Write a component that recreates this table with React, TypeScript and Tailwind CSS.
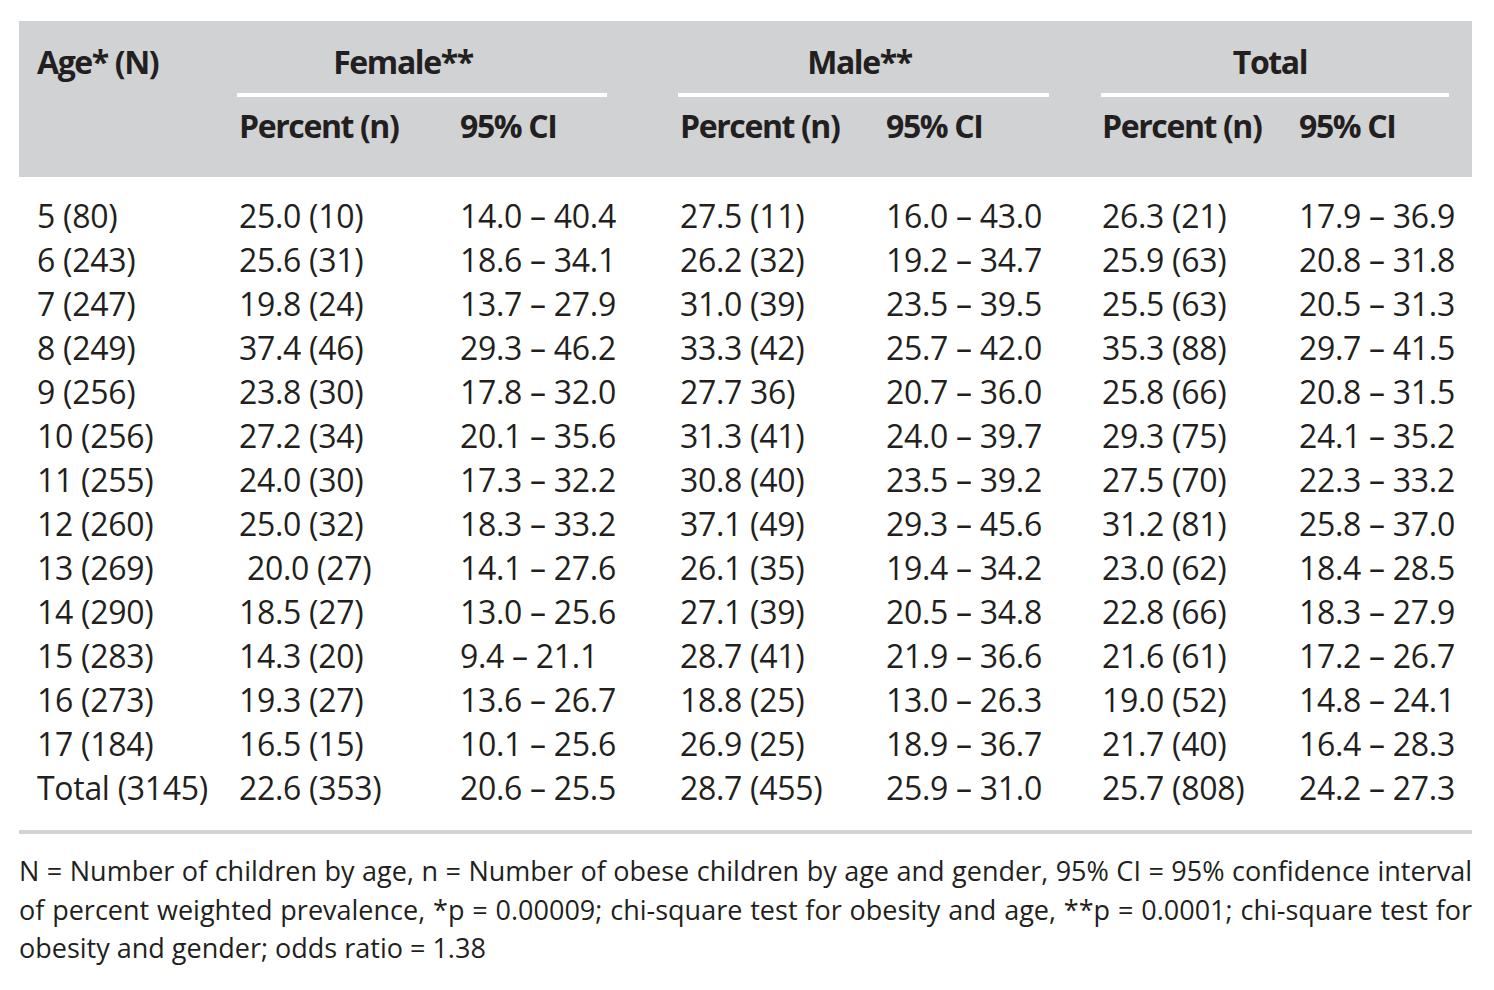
const rows: string[][] = [
  ['5 (80)', '25.0 (10)', '14.0 – 40.4', '27.5 (11)', '16.0 – 43.0', '26.3 (21)', '17.9 – 36.9'],
  ['6 (243)', '25.6 (31)', '18.6 – 34.1', '26.2 (32)', '19.2 – 34.7', '25.9 (63)', '20.8 – 31.8'],
  ['7 (247)', '19.8 (24)', '13.7 – 27.9', '31.0 (39)', '23.5 – 39.5', '25.5 (63)', '20.5 – 31.3'],
  ['8 (249)', '37.4 (46)', '29.3 – 46.2', '33.3 (42)', '25.7 – 42.0', '35.3 (88)', '29.7 – 41.5'],
  ['9 (256)', '23.8 (30)', '17.8 – 32.0', '27.7 36)', '20.7 – 36.0', '25.8 (66)', '20.8 – 31.5'],
  ['10 (256)', '27.2 (34)', '20.1 – 35.6', '31.3 (41)', '24.0 – 39.7', '29.3 (75)', '24.1 – 35.2'],
  ['11 (255)', '24.0 (30)', '17.3 – 32.2', '30.8 (40)', '23.5 – 39.2', '27.5 (70)', '22.3 – 33.2'],
  ['12 (260)', '25.0 (32)', '18.3 – 33.2', '37.1 (49)', '29.3 – 45.6', '31.2 (81)', '25.8 – 37.0'],
  ['13 (269)', '\u00a020.0 (27)', '14.1 – 27.6', '26.1 (35)', '19.4 – 34.2', '23.0 (62)', '18.4 – 28.5'],
  ['14 (290)', '18.5 (27)', '13.0 – 25.6', '27.1 (39)', '20.5 – 34.8', '22.8 (66)', '18.3 – 27.9'],
  ['15 (283)', '14.3 (20)', '9.4 – 21.1', '28.7 (41)', '21.9 – 36.6', '21.6 (61)', '17.2 – 26.7'],
  ['16 (273)', '19.3 (27)', '13.6 – 26.7', '18.8 (25)', '13.0 – 26.3', '19.0 (52)', '14.8 – 24.1'],
  ['17 (184)', '16.5 (15)', '10.1 – 25.6', '26.9 (25)', '18.9 – 36.7', '21.7 (40)', '16.4 – 28.3'],
  ['Total (3145)', '22.6 (353)', '20.6 – 25.5', '28.7 (455)', '25.9 – 31.0', '25.7 (808)', '24.2 – 27.3'],
];

const cols = 'grid grid-cols-[202px_221px_220px_206px_216px_197px_1fr]';

export default function App() {
  return (
    <div className="min-h-[990px] w-[1494px] bg-white pt-[21px] pl-[19px] text-[#231f20] [font-family:'Open_Sans',sans-serif] [font-stretch:90%]">
      <div className="w-[1453px]">
        {/* header band */}
        <div className="bg-[#d1d2d4] h-[156px] pl-[18px] pt-[40px] font-bold text-[32px] leading-[44px] tracking-[-1.4px]">
          <div className={cols}>
            <div className="-mt-[21px]">Age* (N)</div>
            <div className="col-span-2 -ml-[2px] w-[370px] flex flex-col items-center">
              <div className="-mt-[21px] pr-[38px]">Female**</div>
              <div className="h-[4px] w-full bg-white mt-[9px]" />
            </div>
            <div className="col-span-2 -ml-[2px] w-[371px] flex flex-col items-center">
              <div className="-mt-[21px] pr-[8px]">Male**</div>
              <div className="h-[4px] w-full bg-white mt-[9px]" />
            </div>
            <div className="col-span-2 -ml-[1px] w-[348px] flex flex-col items-center">
              <div className="-mt-[21px] pr-[10px]">Total</div>
              <div className="h-[4px] w-full bg-white mt-[9px]" />
            </div>
          </div>
          <div className={`${cols} mt-[7px]`}>
            <div />
            <div>Percent (n)</div>
            <div>95% CI</div>
            <div>Percent (n)</div>
            <div>95% CI</div>
            <div>Percent (n)</div>
            <div>95% CI</div>
          </div>
        </div>

        {/* body rows */}
        <div className="pl-[18px] pt-[17px] pb-[20px] text-[32px] leading-[44px] tracking-[-0.3px]">
          {rows.map((r) => (
            <div key={r[0]} className={cols}>
              {r.map((c, i) => (
                <div key={i} className="whitespace-nowrap">{c}</div>
              ))}
            </div>
          ))}
        </div>
        <div className="h-[4px] bg-[#d1d2d4]" />

        {/* footnote */}
        <div className="pt-[18px] text-[27px] leading-[38.5px]">
          <div className="text-justify [text-align-last:justify] whitespace-nowrap">
            N = Number of children by age, n = Number of obese children by age and gender, 95% CI = 95% confidence interval
          </div>
          <div className="text-justify [text-align-last:justify] whitespace-nowrap">
            of percent weighted prevalence, *p = 0.00009; chi-square test for obesity and age, **p = 0.0001; chi-square test for
          </div>
          <div>obesity and gender; odds ratio = 1.38</div>
        </div>
      </div>
    </div>
  );
}
